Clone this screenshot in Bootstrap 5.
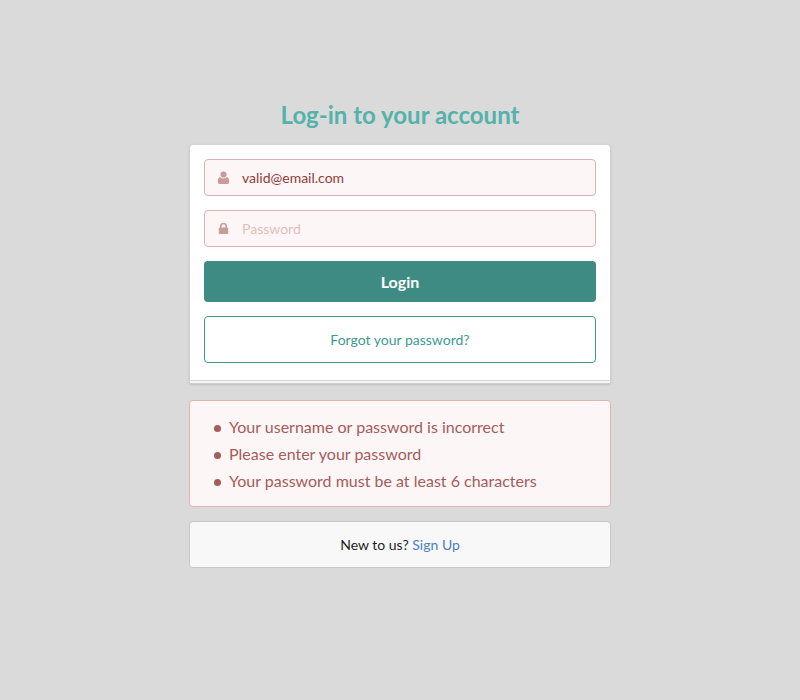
<!DOCTYPE html>
<html lang="en">
<head>
<meta charset="utf-8">
<meta name="viewport" content="width=device-width, initial-scale=1">
<title>Log-in</title>
<link href="https://cdn.jsdelivr.net/npm/bootstrap@5.3.0/dist/css/bootstrap.min.css" rel="stylesheet">
<style>
body { background: #dadada; font-family: Lato, "Helvetica Neue", Arial, sans-serif; font-size: 14px; line-height: 17px; color: #1e1e1e; text-rendering: optimizeLegibility; }
.login-page { padding-bottom: 32px; }
.login-column { max-width: 450px; padding: 0 14px; }
.login-title { font-size: 24px; line-height: 29px; color: #54b2aa; margin-bottom: 15px; }
.login-stack { gap: 14px; }
.login-panel { padding: 14px 14px 20px; gap: 14px; border: 1px solid #d0d0d0; border-top-color: #d6d6d6; border-radius: 4px; box-shadow: 0 1px 2px rgba(34,36,38,.15); margin-bottom: 2px; }
.login-panel::after { content: ""; position: absolute; left: 0; right: 0; bottom: 0; height: 3px; border-top: 1px solid #d4d4d5; background: #f6f6f6; }
.field-icon { position: absolute; left: 12px; top: 12px; width: 14px; height: 14px; fill: #c99b99; pointer-events: none; }
.login-input, .login-input:focus { height: 37px; padding: 9px 14px 9px 37px; font-size: 14px; line-height: 17px; color: #903c3a; background: #fcf6f6; border: 1px solid #dbb1b1; border-radius: 4px; }
.login-input::placeholder { color: #e2bfbd; opacity: 1; }
.btn-login { height: 41px; font-size: 16px; line-height: 17px; color: #fff; background: #3e8b84; border: 0; border-radius: 4px; }
.btn-login:hover { color: #fff; background: #35776f; }
.btn-forgot { padding: 14px; font-size: 14px; line-height: 17px; color: #409a91; border: 1px solid #409a91; border-radius: 4px; }
.btn-forgot:hover { color: #2f776f; border-color: #2f776f; }
.error-box { padding: 12px 14px; color: #a65c5a; background: #fcf6f6; border: 1px solid #dfb3b3; border-radius: 4px; font-size: 16px; line-height: 27px; }
.error-box ul { padding-left: 10px; }
.error-box li { padding-left: 15px; position: relative; }
.error-box li::before { content: ""; position: absolute; left: 0; top: 12px; width: 7px; height: 7px; border-radius: 50%; background: #a65c5a; }
.signup-box { padding: 14px; background: #f8f8f8; border: 1px solid #c8c8c9; border-radius: 4px; line-height: 17px; }
.signup-box a { color: #4a80c4; }
</style>
<script src="https://cdn.jsdelivr.net/npm/bootstrap@5.3.0/dist/js/bootstrap.bundle.min.js" defer></script>
</head>
<body>
<main class="login-page min-vh-100 d-flex align-items-center justify-content-center">
  <div class="login-column w-100">
    <h2 class="login-title text-center fw-bold">Log-in to your account</h2>
    <div class="login-stack d-flex flex-column">
      <form class="login-panel bg-white position-relative d-flex flex-column">
        <div class="position-relative">
          <svg class="field-icon" viewBox="0 0 14 14" aria-hidden="true"><circle cx="7.500" cy="3.500" r="3.100"/><path d="M4.300 6Q5.500 7.600 7.500 7.600T10.700 6Q13.200 6.600 13.200 10.800Q13.200 13 11.300 13H3.700Q1.800 13 1.800 10.800Q1.800 6.600 4.300 6Z"/></svg>
          <input type="email" class="form-control shadow-none login-input" aria-label="E-mail address" placeholder="E-mail address" value="valid@email.com">
        </div>
        <div class="position-relative">
          <svg class="field-icon" viewBox="0 0 14 14" aria-hidden="true"><path fill-rule="evenodd" d="M4 5.500V4.200a3.500 3.500 0 0 1 7 0V5.500H11.400a.8.8 0 0 1 .8.8v4.900a.8.8 0 0 1-.8.800H3.600a.8.8 0 0 1-.8-.8V6.300A.8.800 0 0 1 3.600 5.500zM5.600 5.500h3.800V4.200a1.900 1.900 0 0 0-3.800 0z"/></svg>
          <input type="password" class="form-control shadow-none login-input" aria-label="Password" placeholder="Password">
        </div>
        <button type="button" class="btn btn-login w-100 fw-bold">Login</button>
        <a href="#" class="btn btn-forgot w-100">Forgot your password?</a>
      </form>
      <div class="error-box" role="alert">
        <ul class="list-unstyled mb-0">
          <li>Your username or password is incorrect</li>
          <li>Please enter your password</li>
          <li>Your password must be at least 6 characters</li>
        </ul>
      </div>
      <div class="signup-box text-center">New to us? <a href="#" class="text-decoration-none">Sign Up</a></div>
    </div>
  </div>
</main>
</body>
</html>
